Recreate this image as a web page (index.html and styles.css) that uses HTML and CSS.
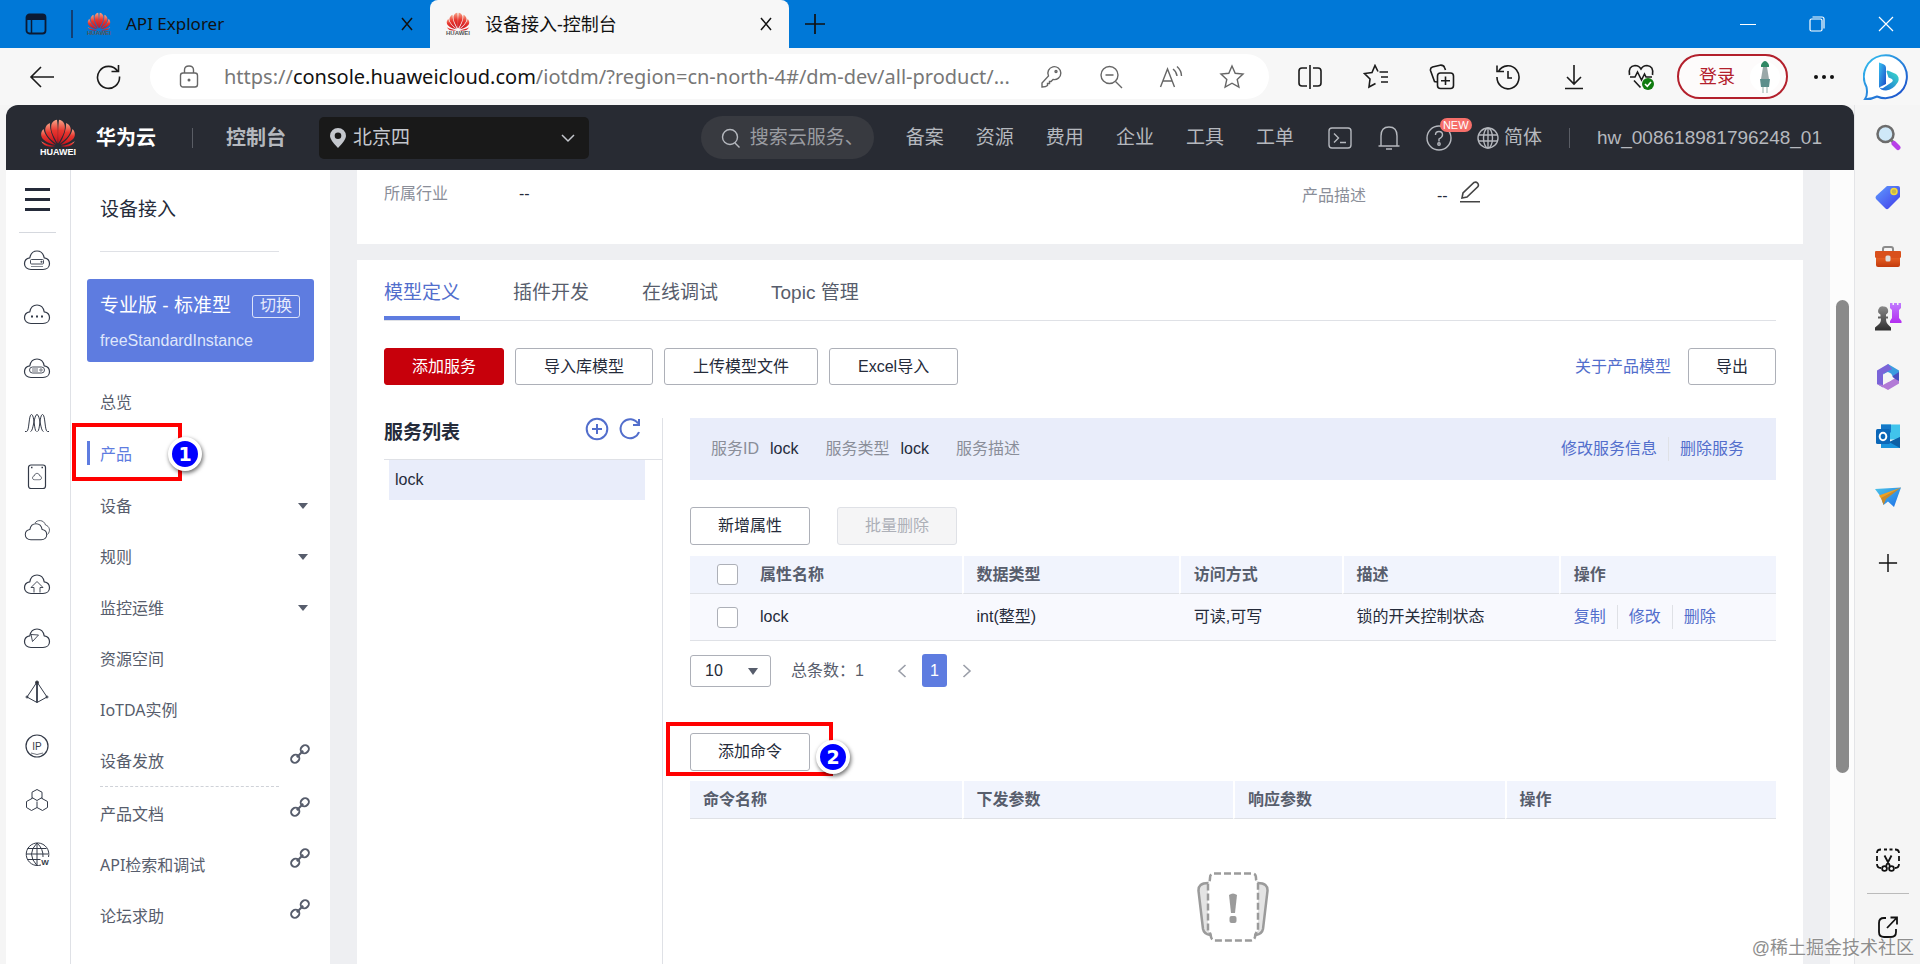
FILE: index.html
```html
<!DOCTYPE html>
<html lang="zh-CN">
<head>
<meta charset="utf-8">
<title>设备接入-控制台</title>
<link rel="stylesheet" href="styles.css">
</head>
<body>
<svg class="defs" aria-hidden="true">
  <defs>
    <linearGradient id="petal" x1="0" y1="0" x2="0" y2="1"><stop offset="0" stop-color="#f7a488"/><stop offset=".45" stop-color="#e8372f"/><stop offset="1" stop-color="#c8101c"/></linearGradient>
    <linearGradient id="bingb" x1="0" y1="0" x2="1" y2="1"><stop offset="0" stop-color="#35c3f0"/><stop offset="1" stop-color="#1b48c8"/></linearGradient>
    <linearGradient id="bingc" x1="0" y1="1" x2="1" y2="0"><stop offset="0" stop-color="#1a5fd8"/><stop offset="1" stop-color="#3ce0c8"/></linearGradient>
    <linearGradient id="tagg" x1="0" y1="0" x2="1" y2="1"><stop offset="0" stop-color="#5f9dff"/><stop offset="1" stop-color="#4038e8"/></linearGradient>
    <linearGradient id="purp" x1="0" y1="0" x2="0" y2="1"><stop offset="0" stop-color="#c07cff"/><stop offset="1" stop-color="#b32df0"/></linearGradient>
    <linearGradient id="gry" x1="0" y1="0" x2="0" y2="1"><stop offset="0" stop-color="#8a8a8a"/><stop offset="1" stop-color="#2e2e2e"/></linearGradient>
    <linearGradient id="org" x1="0" y1="0" x2="0" y2="1"><stop offset="0" stop-color="#f06a2a"/><stop offset="1" stop-color="#c23a0c"/></linearGradient>
    <linearGradient id="plane" x1="0" y1="0" x2="1" y2="1"><stop offset="0" stop-color="#4cc4e8"/><stop offset="1" stop-color="#1d6fe8"/></linearGradient>
  </defs>
  <symbol id="i-flower" viewBox="0 0 36 28">
    <g id="half" fill="url(#petal)">
      <path d="M17.6 24.5C14 18 10.6 12.600 11.200 7C11.500 3.500 14.300 1 17 .8C17.800 6 18.200 16 17.600 24.500Z"/>
      <path d="M16.400 25C8.500 19.500 4.600 14 5.300 9.600C5.700 6.800 7.700 5 9.800 4C9.800 11 12 17.500 16.400 25Z"/>
      <path d="M15.500 25.800C7 24 1.800 20.400 1.200 16.400C.8 13.600 1.900 11.600 3.500 9.900C5 16.500 9.500 21.500 15.500 25.800Z"/>
      <path d="M15.400 27C8.500 28.600 3.300 27.200 1.200 22.300C5.200 24.900 9.600 26.600 15.400 27Z"/>
    </g>
    <use href="#half" transform="matrix(-1 0 0 1 36 0)"/>
  </symbol>
  <symbol id="i-cloud" viewBox="0 0 28 22"><path d="M8 20.500C4.300 20.500 1.500 18.200 1.500 14.700C1.500 11.500 3.700 9.300 6.800 8.800C7.600 4.700 10.400 2 14 2C17.600 2 20.400 4.700 21.200 8.800C24.300 9.300 26.500 11.500 26.500 14.700C26.500 18.200 23.700 20.500 20 20.500Z"/></symbol>
  <symbol id="i-x" viewBox="0 0 16 16"><path d="M3 2L13 14M13 2L3 14"/></symbol>
  <symbol id="i-plus" viewBox="0 0 22 22"><path d="M11 1V21M1 11H21"/></symbol>
  <symbol id="i-link" viewBox="0 0 20 20"><g transform="rotate(-45 10 10)"><rect x="-1" y="6.300" width="8.500" height="7.400" rx="3.700"/><rect x="12.500" y="6.300" width="8.500" height="7.400" rx="3.700"/><path d="M5.500 10H14.500"/></g></symbol>
  <symbol id="i-star" viewBox="0 0 26 26"><path d="M13 2L16.200 9.300L24 10L18.200 15.400L19.900 23.200L13 19.200L6.100 23.200L7.800 15.400L2 10L9.800 9.300Z"/></symbol>
</svg>

<div class="window">
  <div class="titlebar">
    <button class="tabmenu" type="button" aria-label="标签操作菜单"><svg width="22" height="22" viewBox="0 0 22 22" fill="none" stroke="#0b1a33" stroke-width="1.800"><rect x="1.500" y="1.500" width="19" height="19" rx="3"/><path d="M2 4.500H20" stroke-width="5"/><path d="M6.500 6V20" stroke-width="1.500"/></svg></button>
    <div class="tab">
      <span class="favicon"><svg width="24" height="19"><use href="#i-flower"/></svg><small>HUAWEI</small></span>
      <span class="tab-title">API Explorer</span>
      <button class="tab-close" type="button" aria-label="关闭标签"><svg width="16" height="16" fill="none" stroke="#111" stroke-width="1.500"><use href="#i-x"/></svg></button>
    </div>
    <div class="tab tab-on">
      <span class="favicon"><svg width="24" height="19"><use href="#i-flower"/></svg><small>HUAWEI</small></span>
      <span class="tab-title">设备接入-控制台</span>
      <button class="tab-close" type="button" aria-label="关闭标签"><svg width="16" height="16" fill="none" stroke="#111" stroke-width="1.500"><use href="#i-x"/></svg></button>
    </div>
    <button class="newtab" type="button" aria-label="新建标签"><svg width="22" height="22" fill="none" stroke="#111" stroke-width="1.700"><use href="#i-plus"/></svg></button>
    <div class="winctl">
      <button type="button" aria-label="最小化"><svg width="16" height="16" stroke="#fff"><path d="M0 8.500H16"/></svg></button>
      <button type="button" aria-label="还原"><svg width="16" height="16" fill="none" stroke="#fff" stroke-width="1.200"><rect x="1" y="3" width="12" height="12" rx="1.500"/><path d="M3.500 1H13Q15 1 15 3V12.500"/></svg></button>
      <button type="button" aria-label="关闭"><svg width="16" height="16" fill="none" stroke="#fff" stroke-width="1.200"><path d="M1 1L15 15M15 1L1 15"/></svg></button>
    </div>
  </div>

  <div class="toolbar">
    <button class="tool" type="button" aria-label="后退"><svg width="26" height="26" viewBox="0 0 26 26"><path d="M25 13H2M12 3L2 13L12 23"/></svg></button>
    <button class="tool tool-reload" type="button" aria-label="刷新"><svg width="26" height="26" viewBox="0 0 26 26"><path d="M22.500 7A11 11 0 1 0 24.500 12.500M23.500 1V7.500H16.500"/></svg></button>
    <div class="address">
      <svg width="20" height="24" viewBox="0 0 20 24"><rect x="1.500" y="8" width="17" height="14" rx="2.500"/><path d="M5.500 8V5Q5.500 1 10 1Q14.500 1 14.500 5V8"/><circle cx="10" cy="15" r=".8" fill="#666"/></svg>
      <span class="url">https://<b>console.huaweicloud.com</b>/iotdm/?region=cn-north-4#/dm-dev/all-product/...</span>
      <span class="address-tools">
        <svg width="24" height="24" viewBox="0 0 24 24"><path d="M9.500 11A6.500 6.500 0 1 1 14 14.500L12 16.500H10.500V18.500H8.500V20.500Q7 22 3 22V18Z"/><circle cx="17" cy="6.500" r="1"/></svg>
        <svg width="24" height="24" viewBox="0 0 24 24"><circle cx="10.500" cy="10" r="8.500"/><path d="M16.500 16.500L23 23M6.500 10H14.500"/></svg>
        <svg width="24" height="24" viewBox="0 0 24 24"><path d="M1.500 22L8.500 4L15.500 22M4 16H13M14 4Q17.500 6.500 18 11M18 1.500Q22.500 5.500 22.500 11"/></svg>
        <svg width="26" height="26"><use href="#i-star"/></svg>
      </span>
    </div>
    <div class="tools">
      <button class="tool" type="button" aria-label="分屏"><svg width="26" height="26" viewBox="0 0 26 26"><path d="M10 4H5Q2 4 2 7V19Q2 22 5 22H10M16 4H21Q24 4 24 7V19Q24 22 21 22H16M13 1V25"/></svg></button>
      <button class="tool" type="button" aria-label="收藏夹"><svg width="26" height="26" viewBox="0 0 26 26"><path d="M16.500 8H25M18 13H25M18 18H25M15 7.500L12 1.500L9 8.500L1.500 9.500L7 15L6 23L12.500 19.500"/></svg></button>
      <button class="tool" type="button" aria-label="集锦"><svg width="26" height="26" viewBox="0 0 26 26"><rect x="8.500" y="9" width="16" height="15.500" rx="3"/><path d="M16.500 12.500V21M12 16.800H21M8 18L5.500 17.500L1.500 6.500Q1 4 3.500 3L11 1.200Q14.500 .8 15.500 3.500L16.500 6"/></svg></button>
      <button class="tool" type="button" aria-label="历史记录"><svg width="26" height="26" viewBox="0 0 26 26"><path d="M3.500 7.500A11 11.500 0 1 1 2 13M2 1.500V7.500H9M13 7V14H17"/></svg></button>
      <button class="tool" type="button" aria-label="下载"><svg width="26" height="26" viewBox="0 0 26 26"><path d="M13 1V20M6 13L13 20L20 13M4 24.500H22"/></svg></button>
      <button class="tool" type="button" aria-label="浏览器健康"><svg width="28" height="28" viewBox="0 0 28 28"><path d="M2.500 12Q1 3 8 2.500Q12 2.500 14 6Q16 2.500 20 2.500Q27 3 25.500 12M3 14H8L10.500 9L14.500 17L17.500 11L19 14H25M7 17.500L13.500 24.500"/><circle cx="21" cy="21" r="6" fill="#0f7b0f" stroke="none"/><path d="M18 21L20.300 23.300L24 19" stroke="#fff"/></svg></button>
      <button class="login" type="button"><span>登录</span><svg width="30" height="38" viewBox="0 0 30 38"><circle cx="15" cy="19" r="15" fill="#fff"/><path d="M11 7Q15-1 19 7V9H11Z" fill="#2f8763"/><path d="M13 9H17L19 21H11Z" fill="#9aa8a8"/><path d="M10 21H20L19 29H11Z" fill="#5c8f8c"/><path d="M13 29V35M17 29V35" stroke="#c9d6d3" stroke-width="2"/></svg></button>
      <button class="tool dots" type="button" aria-label="更多"><svg width="22" height="6"><circle cx="3" cy="3" r="2"/><circle cx="11" cy="3" r="2"/><circle cx="19" cy="3" r="2"/></svg></button>
      <button class="bing" type="button" aria-label="必应"><svg width="48" height="48" viewBox="0 0 48 48"><path d="M2 46Q5 42 3.500 34A21.500 21.500 0 1 1 14 43.500Q8 46.500 2 46Z" fill="#fff" stroke="url(#bingb)" stroke-width="2"/><path d="M16 9.500L20 11Q23 12 23 15V31L16 34.500Z" fill="url(#bingb)"/><path d="M16 33Q17 36 20 35L29 29Q31 27 28 25.500L25.500 24.500L23.500 18.500Q24 17 26 18L33 21Q37 24 35 29Q30 37 23 37.500Q17 37.500 16 33Z" fill="url(#bingc)"/></svg></button>
    </div>
  </div>

  <div class="viewport">
    <div class="page">
      <header class="header">
        <div class="brand"><span class="logo"><svg width="36" height="28"><use href="#i-flower"/></svg><small>HUAWEI</small></span><strong>华为云</strong></div>
        <i class="vbar"></i>
        <a class="console" href="#">控制台</a>
        <button class="region" type="button"><svg width="16" height="20" viewBox="0 0 16 20"><path fill-rule="evenodd" d="M8 0A8 8 0 0 1 16 8Q16 12 8 20Q0 12 0 8A8 8 0 0 1 8 0ZM8 4.500A3.300 3.300 0 1 0 8 11.100A3.300 3.300 0 1 0 8 4.500Z" fill="#c4c7cd"/></svg><span>北京四</span><svg width="16" height="16" viewBox="0 0 16 16" fill="none" stroke="#c4c7cd" stroke-width="1.500"><path d="M2 5L8 11L14 5"/></svg></button>
        <div class="header-right">
          <label class="search"><svg width="20" height="20" viewBox="0 0 20 20" fill="none" stroke="#9a9ca1" stroke-width="1.500"><circle cx="9" cy="9" r="7.500"/><path d="M14 15L18.500 19.500"/></svg><input type="text" placeholder="搜索云服务、" aria-label="搜索云服务"></label>
          <nav class="topnav"><a href="#">备案</a><a href="#">资源</a><a href="#">费用</a><a href="#">企业</a><a href="#">工具</a><a href="#">工单</a></nav>
          <div class="header-icons">
            <svg width="24" height="24" viewBox="0 0 24 24"><rect x="1" y="2" width="22" height="20" rx="3"/><path d="M6 7.500L10.500 12L6 16.500M12 16.500H18"/></svg>
            <svg width="24" height="26" viewBox="0 0 24 26"><path d="M1.500 21H22.500M4 21V11Q4 2 12 2Q20 2 20 11V21M9 24H15"/></svg>
            <span class="help"><svg width="26" height="26" viewBox="0 0 26 26"><circle cx="13" cy="13" r="12"/><path d="M9.500 10Q9.500 6.500 13 6.500Q16.500 6.500 16.500 10Q16.500 12 13 14V16.500"/><circle cx="13" cy="19" r="1.200"/></svg><em>NEW</em></span>
          </div>
          <a class="lang" href="#"><svg width="24" height="24" viewBox="0 0 24 24"><circle cx="12" cy="12" r="10"/><ellipse cx="12" cy="12" rx="4.500" ry="10"/><path d="M12 2V22M2.500 9H21.500M2.500 15H21.500"/></svg>简体</a>
          <i class="vbar"></i>
          <a class="user" href="#">hw_008618981796248_01</a>
        </div>
      </header>

      <div class="body">
        <nav class="rail" aria-label="服务">
          <button type="button" class="burger" aria-label="展开菜单"><i></i><i></i><i></i></button>
          <a href="#" aria-label="服务器"><svg viewBox="0 0 28 28"><use href="#i-cloud" y="2" width="28" height="22"/><rect x="7.500" y="12.500" width="13" height="4.500" rx="1" stroke-width=".9"/><path d="M8 19.500H20" stroke-width=".6"/><circle cx="18.500" cy="14.700" r=".4"/></svg></a>
          <a href="#" aria-label="容器"><svg viewBox="0 0 28 28"><use href="#i-cloud" y="2" width="28" height="22"/><path d="M8 15.500H10M13 15.500H15M18 15.500H20" stroke-width="2"/></svg></a>
          <a href="#" aria-label="存储"><svg viewBox="0 0 28 28"><use href="#i-cloud" y="2" width="28" height="22"/><rect x="6.500" y="12" width="15" height="6" rx="3" stroke-width=".9"/><path d="M9 14H15M9 16H15" stroke-width=".7"/><circle cx="18" cy="15" r="1.200" stroke-width=".7"/></svg></a>
          <a href="#" aria-label="监控"><svg viewBox="0 0 28 28" class="fine"><path d="M2 22.500H3.500C6.500 22.500 5.500 5.500 8.500 5.500S11 22.500 13.500 22.500M7.500 22.500C10.500 22.500 11 5.500 14 5.500S17.500 22.500 20.500 22.500M14.500 22.500C17 22.500 16.500 5.500 19.500 5.500S21.500 22.500 24.500 22.500H26"/></svg></a>
          <a href="#" aria-label="硬盘"><svg viewBox="0 0 28 28"><rect x="5.500" y="2" width="17" height="23.500" rx="2.500"/><path d="M8 4.500H9.500M18.500 4.500H20" stroke-width="1.500"/><use href="#i-cloud" x="9" y="9.500" width="10" height="8" stroke-width="2.200"/></svg></a>
          <a href="#" aria-label="多云"><svg viewBox="0 0 28 28"><use href="#i-cloud" x="1" y="5" width="24" height="19"/><path d="M12 6C14 2.500 21 2.500 22.500 8C26.500 9 28 14 24.500 17.500" stroke-width=".8"/></svg></a>
          <a href="#" aria-label="上传"><svg viewBox="0 0 28 28"><use href="#i-cloud" y="2" width="28" height="22"/><path d="M11 21.500V16.500H8L14 10.500L20 16.500H17V21.500" stroke-width=".9"/></svg></a>
          <a href="#" aria-label="导航"><svg viewBox="0 0 28 28"><use href="#i-cloud" y="2" width="28" height="22"/><path d="M8 9.500L15.500 10L9.500 16.500Z" stroke-width=".9"/></svg></a>
          <a href="#" aria-label="云图"><svg viewBox="0 0 28 28" class="fine"><path d="M14 3L4 18L14 23.500L24 18Z"/><path d="M14 3V23.500" stroke-width="1.800"/><circle cx="14" cy="3.500" r="1.500" fill="#333"/><circle cx="4" cy="18" r="1"/><circle cx="24" cy="18" r="1"/></svg></a>
          <a href="#" aria-label="弹性公网"><svg viewBox="0 0 28 28"><circle cx="14" cy="13" r="11"/><path d="M8 20Q14 23 20 20" stroke-width=".7"/><text x="14" y="17" text-anchor="middle">IP</text></svg></a>
          <a href="#" aria-label="区块"><svg viewBox="0 0 28 28" class="fine"><path d="M14 2.500L19 5.200V10.500L14 13.500L9 10.500V5.200ZM9 11.500L3.500 14.500V20.500L8.500 23.500L14 20.500V14.500M19 11.500L24.500 14.500V20.500L19.500 23.500L14 20.500M9 10.500V12M19 10.500V12"/></svg></a>
          <a href="#" aria-label="域名"><svg viewBox="0 0 28 28" class="fine"><path d="M18 24A11.300 11.300 0 1 1 25.500 16"/><path d="M14 2V24.500M3 13H25M4.500 7.500H23.500M4.500 18.500H17.500M14 2Q3 13 14 24.500M14 2Q20.500 8 20 16"/><text x="22" y="24" text-anchor="middle" class="w">W</text></svg></a>
        </nav>

        <aside class="side">
          <h2>设备接入</h2>
          <hr>
          <div class="plan"><div class="plan-top"><b>专业版 - 标准型</b><button type="button">切换</button></div><span>freeStandardInstance</span></div>
          <ul class="menu">
            <li><a href="#">总览</a></li>
            <li class="on"><a href="#">产品</a><span class="mark mark-side"><i>1</i></span></li>
            <li><a href="#">设备</a><i class="caret"></i></li>
            <li><a href="#">规则</a><i class="caret"></i></li>
            <li><a href="#">监控运维</a><i class="caret"></i></li>
            <li><a href="#">资源空间</a></li>
            <li><a href="#">IoTDA实例</a></li>
            <li><a href="#">设备发放</a><svg class="chain"><use href="#i-link"/></svg></li>
            <li class="dash"><a href="#">产品文档</a><svg class="chain"><use href="#i-link"/></svg></li>
            <li><a href="#">API检索和调试</a><svg class="chain"><use href="#i-link"/></svg></li>
            <li><a href="#">论坛求助</a><svg class="chain"><use href="#i-link"/></svg></li>
          </ul>
        </aside>

        <main class="content">
          <section class="card summary">
            <dl><dt>所属行业</dt><dd>--</dd></dl>
            <dl><dt>产品描述</dt><dd>-- <button type="button" aria-label="编辑"><svg width="20" height="22" viewBox="0 0 20 22" fill="none" stroke="#444" stroke-width="1.600"><path d="M2 17L3 12L14 1.500Q16 .5 17.500 2Q19 3.500 18 5.500L7 16ZM0 20.800H20"/></svg></button></dd></dl>
          </section>
          <section class="card model">
            <div class="tabs"><a class="on" href="#">模型定义</a><a href="#">插件开发</a><a href="#">在线调试</a><a href="#">Topic 管理</a></div>
            <div class="actions">
              <button class="btn primary" type="button">添加服务</button><button class="btn" type="button">导入库模型</button><button class="btn" type="button">上传模型文件</button><button class="btn" type="button">Excel导入</button>
              <a class="about" href="#">关于产品模型</a><button class="btn" type="button">导出</button>
            </div>
            <div class="split">
              <div class="services">
                <div class="services-head"><h3>服务列表</h3>
                  <button type="button" aria-label="新增"><svg width="24" height="24" viewBox="0 0 24 24"><circle cx="12" cy="12" r="10.300"/><path d="M12 7V17M7 12H17"/></svg></button>
                  <button type="button" aria-label="刷新"><svg width="24" height="24" viewBox="0 0 24 24"><path d="M20 6.500A9.500 9.500 0 1 0 21 15M21 2V8H15"/></svg></button>
                </div>
                <a class="service" href="#">lock</a>
              </div>
              <div class="detail">
                <div class="info">
                  <span>服务ID</span><b>lock</b><span>服务类型</span><b>lock</b><span>服务描述</span>
                  <div class="ops"><a href="#">修改服务信息</a><a href="#">删除服务</a></div>
                </div>
                <div class="bar"><button class="btn" type="button">新增属性</button><button class="btn" type="button" disabled>批量删除</button></div>
                <table class="props">
                  <colgroup><col class="c25"><col class="c20"><col class="c15"><col class="c20"><col class="c20"></colgroup>
                  <thead><tr><th><label><input type="checkbox" aria-label="全选">属性名称</label></th><th>数据类型</th><th>访问方式</th><th>描述</th><th>操作</th></tr></thead>
                  <tbody><tr><td><label><input type="checkbox">lock</label></td><td>int(整型)</td><td>可读,可写</td><td>锁的开关控制状态</td><td><div class="ops"><a href="#">复制</a><a href="#">修改</a><a href="#">删除</a></div></td></tr></tbody>
                </table>
                <div class="pager">
                  <div class="size"><select aria-label="每页条数"><option>10</option></select><i class="caret"></i></div>
                  <span>总条数：1</span>
                  <button type="button" aria-label="上一页"><svg width="10" height="14" viewBox="0 0 10 14"><path d="M8.500 1L2 7L8.500 13"/></svg></button>
                  <button type="button" class="cur">1</button>
                  <button type="button" aria-label="下一页"><svg width="10" height="14" viewBox="0 0 10 14"><path d="M1.500 1L8 7L1.500 13"/></svg></button>
                </div>
                <div class="bar bar-cmd"><button class="btn" type="button">添加命令</button><span class="mark mark-cmd"><i>2</i></span></div>
                <table class="cmds"><thead><tr><th>命令名称</th><th>下发参数</th><th>响应参数</th><th>操作</th></tr></thead></table>
                <div class="empty"><svg width="72" height="70" viewBox="0 0 72 70" fill="none" stroke="#9b9b9b" stroke-width="2.500"><path d="M11 11Q1 11 1.500 19L6 57Q7 62 13 63V11Z" fill="#e4e4e4"/><path d="M61 11Q71 11 70.500 19L66 57Q65 62 59 63V11Z" fill="#e4e4e4"/><path d="M17 1.500H55Q59 1.500 59 6Q59 10 61 11V59Q58 61 58 65Q57 68.500 54 68.500H18Q15 68.500 14 65Q14 61 11 59V11Q13 10 13 6Q13 1.500 17 1.500Z" fill="#fff" stroke-dasharray="7 3"/><path d="M32 23Q36 20 40 23L38 41H34Z" fill="#9b9b9b" stroke="none"/><rect x="32.500" y="44" width="7" height="7" rx="2" fill="#9b9b9b" stroke="none"/></svg></div>
              </div>
            </div>
          </section>
        </main>
        <div class="track"><i></i></div>
      </div>
    </div>

    <aside class="edge" aria-label="边栏">
      <button type="button" aria-label="搜索"><svg viewBox="0 0 28 28"><circle cx="11.500" cy="11" r="8" fill="#cfe8f8" stroke="#6c6c6c" stroke-width="2.500"/><path d="M17.500 17.500L20 20" stroke="#777" stroke-width="3"/><path d="M20 20.500L24 24.500" stroke="#b840e8" stroke-width="5" stroke-linecap="round"/></svg></button>
      <button type="button" aria-label="购物"><svg viewBox="0 0 28 28"><path d="M13 3H24Q26 3 26 5V14L14.500 25.500Q13 27 11.500 25.500L2 16Q1 14.500 2 13Z" fill="url(#tagg)"/><circle cx="20" cy="8.500" r="3" fill="#c8b84a" stroke="#f5d93a" stroke-width="1.500"/></svg></button>
      <button type="button" aria-label="工具"><svg viewBox="0 0 28 28"><path d="M9 9V6Q9 4 11 4H17Q19 4 19 6V9" fill="none" stroke="#8b8b8b" stroke-width="2"/><rect x="2" y="12" width="24" height="12" rx="2" fill="url(#org)"/><path d="M1 9Q1 8 2 8H26Q27 8 27 9V14Q27 15 25 15H3Q1 15 1 14Z" fill="#d9501c"/><rect x="11.500" y="12.500" width="5" height="6" rx="1.500" fill="#ddd"/></svg></button>
      <button type="button" aria-label="游戏"><svg viewBox="0 0 28 28"><path d="M16 0H18.500V2H20V0H23V2H24.500V0H27V5L25 7V15L27.500 18V20H16V18L18 15V7L16 5Z" fill="url(#purp)"/><path d="M9.500 3.500A4.300 4.300 0 0 1 12 11.500V13.500H14V15.500H12Q12 20 14.500 22L17 24.500V27.500H1V24.500L4 22Q7 20 7 15.500H4V13.500H6.500V11.500A4.300 4.300 0 0 1 9.500 3.500Z" fill="url(#gry)"/></svg></button>
      <button type="button" aria-label="Microsoft 365"><svg viewBox="0 0 28 28"><path d="M14 1L25 7.500V17L18 13L14 9L9 11.500Z" fill="#3b9de0"/><path d="M14 1L3 7.500V21L9 24.500V11L18 6Z" fill="#7a64d8"/><path d="M3 21L14 27L25 20.500V13L18 17L9 22Z" fill="#b27ad6"/><path d="M18 13.500L25 9V18Q22 17 18 13.500Z" fill="#4a50c0"/><circle cx="14" cy="14" r="4.500" fill="#f5f5f5"/></svg></button>
      <button type="button" aria-label="Outlook"><svg viewBox="0 0 28 28"><rect x="7" y="1.500" width="19" height="15" fill="#41c4ec"/><rect x="7" y="1.500" width="10" height="8" fill="#1478c8"/><path d="M7 14L16.500 19L26 14V25H7Z" fill="#1a93dc"/><path d="M26 14V25L15 19Z" fill="#0d5fa5"/><rect x="2" y="6" width="14" height="15" rx="1.500" fill="#0b67b8"/><ellipse cx="9" cy="13.500" rx="3.300" ry="3.800" fill="none" stroke="#fff" stroke-width="2"/></svg></button>
      <button type="button" aria-label="Drop"><svg viewBox="0 0 28 28"><path d="M1 6L27 4.500L20 24L14 18.500L9.500 22L7 14Z" fill="url(#plane)"/><path d="M27 4.500L5 12.500L7 15.500Z" fill="#f0a020"/><path d="M27 4.500L7 15L9.500 22L12 16Z" fill="#c98a2a"/></svg></button>
      <button type="button" class="edge-add" aria-label="自定义"><svg viewBox="0 0 22 22" fill="none" stroke="#111" stroke-width="1.600"><path d="M11 1V21M1 11H21"/></svg></button>
      <div class="edge-bottom">
        <button type="button" aria-label="截图"><svg viewBox="0 0 28 28" fill="none" stroke="#111" stroke-width="1.800"><path d="M7 22Q3 22 3 18M3 15V10M3 7Q3 3.500 7 3.500M10 3.500H13M15.500 3.500H18.500M21 3.500Q25 3.500 25 7M25 10V15M25 18Q25 22 21 22M10.500 9.500L16 20M17.500 9.500L12 20"/><circle cx="10.500" cy="22.500" r="2.400"/><circle cx="17.500" cy="22.500" r="2.400"/></svg></button>
        <hr>
        <button type="button" aria-label="打开外部窗口"><svg viewBox="0 0 28 28" fill="none" stroke="#111" stroke-width="1.800"><path d="M12 5H10Q5 5 5 10V19Q5 24 10 24H17Q22 24 22 19V16M13 15L23 4.500M16.500 4.500H23V11.500"/></svg></button>
      </div>
    </aside>
  </div>
  <div class="watermark">@稀土掘金技术社区</div>
</div>
</body>
</html>
```
FILE: styles.css
```css
* { box-sizing: border-box; }
html, body { height: 100%; }
body { margin: 0; overflow: hidden; font: 16px/24px "Liberation Sans", "Noto Sans CJK SC", sans-serif; color: #252b3a; background: #f5f5f5; }
button, input, select { font: inherit; color: inherit; }
button { padding: 0; border: 0; background: none; display: inline-flex; align-items: center; justify-content: center; }
a { color: inherit; text-decoration: none; }
svg { display: block; flex: none; }
i, em { font-style: normal; }
ul, dl, dd, h2, h3 { margin: 0; padding: 0; list-style: none; }
.defs { position: absolute; width: 0; height: 0; }
.window { display: flex; flex-direction: column; height: 100%; position: relative; }

/* browser tabs */
.titlebar { display: flex; height: 48px; flex: none; background: #0078d7; font-family: "Noto Sans", "Noto Sans CJK SC", sans-serif; font-size: 17px; color: #111; }
.tabmenu { width: 71px; }
.tab { display: flex; align-items: center; width: 359px; padding: 0 15px; position: relative; }
.tab:not(.tab-on)::before { content: ""; width: 2px; height: 28px; background: #123f73; position: absolute; left: 0; top: 10px; }
.tab-on { background: #f7f7f7; border-radius: 8px 8px 0 0; font-size: 18px; }
.favicon { display: flex; flex-direction: column; align-items: center; width: 26px; margin-right: 14px; }
.favicon small { font: bold 6px/5px "Liberation Sans", sans-serif; color: #555; }
.tab-close { margin-left: auto; }
.newtab { width: 52px; }
.winctl { display: flex; margin-left: auto; }
.winctl button { width: 69px; }

/* address bar */
.toolbar { display: flex; align-items: center; height: 57px; flex: none; padding: 0 9px 0 29px; background: #f7f7f7; }
.toolbar svg { fill: none; stroke: #1b1b1b; stroke-width: 1.6; }
.tool-reload { margin: 0 29px 0 40px; }
.address { display: flex; align-items: center; flex: 1; height: 45px; border-radius: 23px; background: #fff; padding: 0 24px 0 29px; min-width: 0; }
.address svg { stroke: #666; stroke-width: 1.4; }
.url { flex: 1; margin-left: 25px; font: 20px/28px "Noto Sans", sans-serif; color: #777; white-space: nowrap; overflow: hidden; }
.url b { font-weight: 400; color: #111; }
.address-tools { display: flex; align-items: center; gap: 36px; margin-left: 24px; }
.tools { display: flex; align-items: center; gap: 40px; margin-left: 28px; }
.tools .login { width: 111px; height: 45px; margin-left: -18px; border: 2px solid #b3202c; border-radius: 23px; color: #b3202c; font-size: 18px; justify-content: space-between; padding: 0 6px 0 20px; background: #fdfbfb; }
.tools .login svg, .tools .bing svg { stroke: none; }
.dots { margin: 0 -15px; }
.toolbar .dots svg { fill: #111; stroke: none; }
.bing { margin-left: 3px; }

.viewport { display: flex; flex: 1; min-height: 0; padding-left: 6px; }
.page { display: flex; flex-direction: column; flex: 1; min-width: 0; }

/* console header */
.header { display: flex; align-items: center; height: 65px; flex: none; padding: 0 32px 0 34px; background: #282b33; border-radius: 12px 12px 0 0; color: #b5b8be; font-size: 19px; white-space: nowrap; position: relative; }
.brand { display: flex; align-items: center; color: #fff; font-size: 20px; }
.logo { display: flex; flex-direction: column; align-items: center; margin-right: 20px; }
.logo small { font: bold 9px/10px "Liberation Sans", sans-serif; }
.vbar { width: 1px; height: 20px; background: #5a5d65; }
.brand + .vbar { margin: 0 33px 0 36px; }
.console { font-size: 20px; font-weight: 700; }
.region { width: 270px; height: 42px; margin-left: 33px; padding: 0 13px 0 11px; background: #191919; border-radius: 5px; color: #c4c7cd; }
.region span { flex: 1; text-align: left; margin-left: 7px; }
.header-right { display: flex; align-items: center; margin-left: auto; }
.header-right svg { fill: none; stroke: #b5b8be; stroke-width: 1.4; }
.search { display: flex; align-items: center; width: 173px; height: 43px; padding: 0 8px 0 20px; border-radius: 22px; background: #383a40; }
.search input { flex: 1; min-width: 0; height: 28px; margin-left: 9px; padding: 0; border: 0; outline: 0; background: none; }
.search input::placeholder { color: #9a9ca1; opacity: 1; }
.topnav { display: flex; gap: 32px; margin-left: 32px; }
.header-icons { display: flex; align-items: center; gap: 25px; margin: 0 24px 0 34px; }
.help { position: relative; }
.help em { position: absolute; left: 14px; top: -7px; padding: 0 3px; border-radius: 7px; background: #f66f6a; color: #fff; font: 11px/14px "Liberation Sans", sans-serif; }
.lang { display: flex; align-items: center; gap: 4px; }
.lang + .vbar { margin: 0 27px; }

.body { display: flex; flex: 1; min-height: 0; }

/* icon rail */
.rail { display: flex; flex-direction: column; align-items: center; width: 65px; flex: none; padding-right: 2px; background: #fff; border-right: 1px solid #dfe1e6; gap: 26px; }
.burger { flex-direction: column; gap: 7px; width: 37px; height: 63px; padding-bottom: 4px; margin-bottom: -12px; border-bottom: 1px solid #d5d8de; }
.burger i { width: 25px; height: 3px; background: #252b3a; }
.rail svg { width: 28px; height: 28px; fill: none; stroke: #333a48; stroke-width: 1.2; }
.rail .fine { stroke-width: 1; }
.rail text { font: 10px "Liberation Sans", sans-serif; fill: #333a48; stroke: none; }
.rail .w { font-size: 8px; font-weight: 700; }

/* service menu */
.side { width: 259px; flex: none; background: #fff; padding: 27px 16px 0; white-space: nowrap; }
.side h2 { padding-left: 13px; font-size: 19px; font-weight: 400; line-height: 26px; }
.side hr { margin: 28px 35px 27px 13px; border: 0; border-top: 1px solid #dfe1e6; }
.plan { height: 83px; padding: 13px 14px 0 13px; border-radius: 3px; background: #5e7ce0; color: #fff; }
.plan-top { display: flex; justify-content: space-between; align-items: center; height: 28px; margin-bottom: 9px; font-size: 19px; }
.plan b { font-weight: 400; }
.plan button { width: 48px; height: 23px; border: 1px solid #dbe2fa; border-radius: 3px; font-size: 16px; color: #e6ebfc; }
.plan span { display: block; line-height: 24px; color: #dfe6fb; }
.menu { padding-top: 14px; color: #575d6c; font-family: "Noto Sans", "Noto Sans CJK SC", sans-serif; }
.menu li { display: flex; align-items: center; height: 51px; padding: 0 5px 0 13px; position: relative; }
.menu a { flex: 1; }
.menu .on { color: #5e7ce0; height: 53px; }
.menu .on::before { content: ""; position: absolute; left: 0; top: 14px; width: 3px; height: 24px; background: #5e7ce0; }
.menu .dash { height: 53px; padding-top: 2px; }
.dash::before { content: ""; position: absolute; left: 13px; right: 35px; top: 0; border-top: 1px dashed #cfd2d8; }
.caret { border: 5px solid transparent; border-top: 6px solid #575d6c; border-bottom: 0; margin-right: 1px; }
.chain { width: 20px; height: 20px; margin: -14px -1px 0 0; fill: none; stroke: #575d6c; stroke-width: 2; }

/* numbered callouts */
.mark { position: absolute; border: 4px solid #f00; pointer-events: none; }
.mark i { position: absolute; right: -21px; width: 34px; height: 34px; border: 4px solid #fff; border-radius: 50%; background: #00f; box-shadow: 1px 2px 4px rgba(0, 0, 0, .6); color: #fff; font: bold 19px/26px "DejaVu Sans", sans-serif; text-align: center; }
.mark-side { left: -15px; top: -4px; width: 110px; height: 58px; }
.mark-side i { top: 10px; right: -24px; }
.mark-cmd { left: -24px; top: -11px; width: 167px; height: 54px; }
.mark-cmd i { top: 14px; }

/* content */
.content { display: flex; flex-direction: column; flex: 1; min-width: 0; padding: 0 27px; background: #eeeff2; overflow: hidden; }
.card { background: #fff; padding: 0 27px; }
.summary { display: flex; height: 74px; flex: none; }
.summary dl { display: flex; padding-top: 12px; width: 918px; flex: none; color: #252b3a; }
.summary dl + dl { width: auto; padding-top: 14px; }
.summary dt { width: 135px; color: #8a8e99; }
.summary button { margin: -10px 0 0 8px; vertical-align: middle; }
.model { display: flex; flex-direction: column; flex: 1; margin-top: 16px; min-height: 0; }
.tabs { display: flex; flex: none; gap: 53px; height: 61px; border-bottom: 1px solid #dfe1e6; font-size: 19px; line-height: 28px; color: #575d6c; }
.tabs a { padding-top: 19px; height: 60px; }
.tabs .on { color: #526ecc; border-bottom: 4px solid #5e7ce0; }
.actions { display: flex; flex: none; align-items: center; gap: 11px; padding: 27px 0 33px; }
.btn { height: 37px; padding: 0 27px; border: 1px solid #adb0b8; border-radius: 3px; background: #fff; white-space: nowrap; }
.actions .btn { padding: 0 28px; }
.actions .btn:last-child, .actions .primary { padding: 0 27px; }
.btn:disabled { background: #f5f5f6; border-color: #dfe1e6; color: #adb0b8; }
.primary { background: #c7000b; border-color: #c7000b; color: #fff; }
.about { margin-left: auto; margin-right: 6px; color: #526ecc; }
.split { display: flex; flex: 1; min-height: 0; }
.services { width: 279px; flex: none; border-right: 1px solid #dfe1e6; }
.services-head { display: flex; align-items: center; gap: 9px; height: 42px; padding: 0 20px 20px 0; border-bottom: 1px solid #dfe1e6; }
.services-head h3 { flex: 1; font-size: 19px; line-height: 28px; padding-top: 8px; }
.services-head svg { fill: none; stroke: #526ecc; stroke-width: 2; }
.service { display: block; margin: 0 17px 0 5px; padding: 0 6px; line-height: 40px; background: #e9edfa; }
.detail { flex: 1; min-width: 0; padding-left: 27px; }
.info { display: flex; align-items: center; height: 62px; padding: 0 32px 0 21px; background: #e9edfa; }
.info span { color: #8a8e99; }
.info b { font-weight: 400; margin: 0 27px 0 11px; }
.ops { display: flex; color: #526ecc; }
.ops a + a { margin-left: 11px; padding-left: 11px; border-left: 1px solid #dfe1e6; }
.info .ops { margin-left: auto; }
.bar { display: flex; gap: 27px; padding: 27px 0 11px; position: relative; }
.bar .btn { height: 38px; }
.bar-cmd { padding: 0; margin: 46px 0 10px; }
table { width: 100%; table-layout: fixed; border-collapse: separate; border-spacing: 0; }
.c25 { width: 25%; } .c20 { width: 20%; } .c15 { width: 15%; }
th { height: 38px; padding: 0 13px; text-align: left; font-weight: 700; color: #575d6c; background: #f1f4fd; border-bottom: 1px solid #dfe1e6; }
th + th { border-left: 2px solid #fff; }
td { height: 47px; padding: 0 15px; background: #f8f9fe; border-bottom: 1px solid #dfe1e6; }
.props th:first-child { padding-left: 15px; }
table label { display: flex; align-items: center; padding-left: 12px; }
table input { appearance: none; width: 21px; height: 21px; margin: 0 22px 0 0; border: 1px solid #adb0b8; border-radius: 3px; background: #fff; }
.pager { display: flex; align-items: center; height: 33px; margin-top: 13px; color: #575d6c; }
.size { position: relative; }
.size select { display: block; appearance: none; width: 81px; height: 32px; padding: 0 14px; border: 1px solid #adb0b8; border-radius: 3px; color: #252b3a; background: #fff; }
.size .caret { position: absolute; right: 12px; top: 13px; border-top-width: 7px; pointer-events: none; }
.pager span { margin: 0 33px 0 20px; }
.pager svg { fill: none; stroke: #9a9ea8; stroke-width: 1.6; }
.pager .cur { width: 25px; height: 33px; margin: 0 15px; border-radius: 3px; background: #5e7ce0; color: #fff; }
.empty { display: flex; justify-content: center; padding-top: 53px; }
.track { width: 24px; flex: none; padding: 130px 5px 0 6px; background: #fcfcfc; }
.track i { display: block; height: 473px; border-radius: 7px; background: #8a8a8a; }

/* browser edge bar */
.edge { display: flex; flex-direction: column; align-items: center; gap: 32px; width: 66px; flex: none; padding-top: 18px; border-left: 1px solid #e3e4e7; background: #f5f5f5; }
.edge svg { width: 28px; height: 28px; fill: none; }
.edge-add { margin-top: 10px; }
.edge .edge-add svg { width: 20px; height: 20px; }
.edge-bottom { display: flex; flex-direction: column; align-items: center; margin-top: auto; padding-bottom: 23px; }
.edge-bottom hr { width: 42px; margin: 19px 0; border: 0; border-top: 1px solid #bbb; }
.watermark { position: absolute; right: 6px; bottom: 3px; font-size: 18px; line-height: 26px; color: #8e8e8e; text-shadow: 0 0 2px #fff; }
```
